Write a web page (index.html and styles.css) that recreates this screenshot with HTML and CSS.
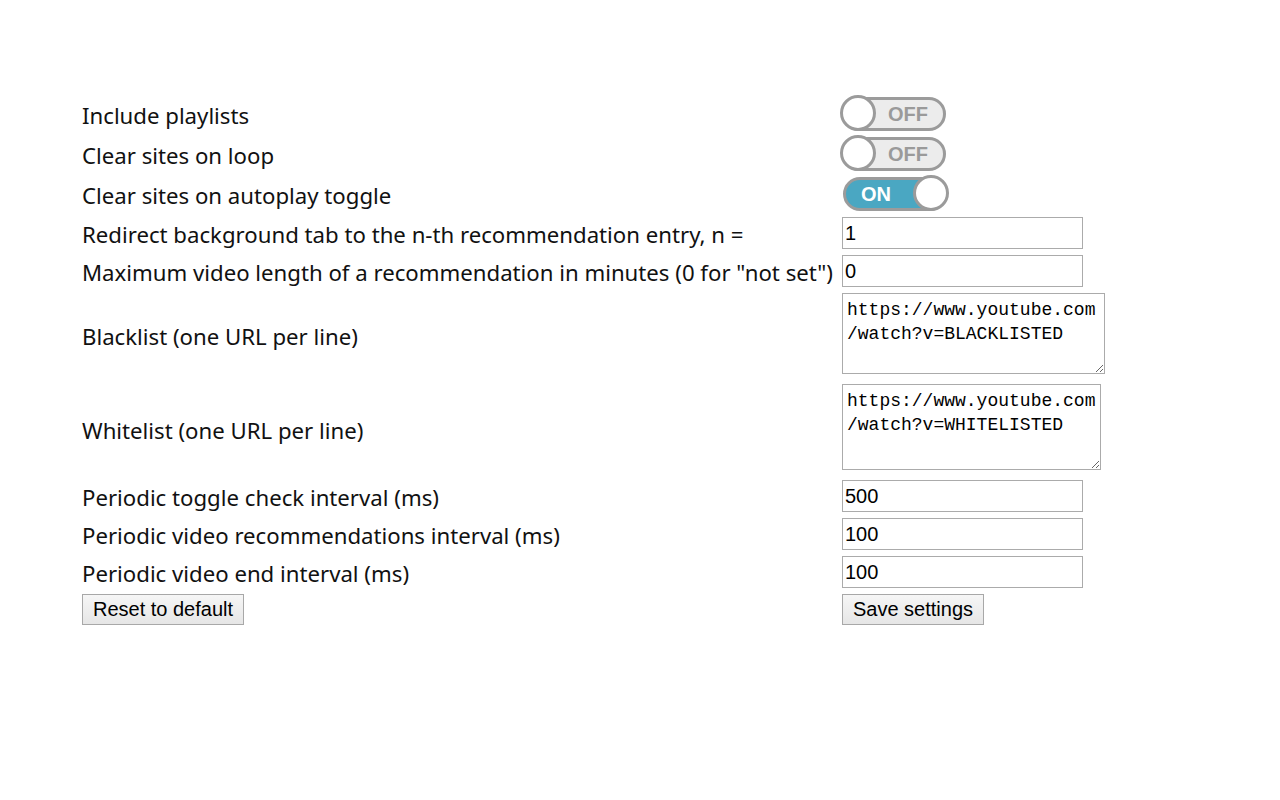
FILE: index.html
```html
<!DOCTYPE html>
<html>
<head>
<meta charset="utf-8">
<link rel="stylesheet" href="styles.css">
</head>
<body>
<div class="page">
  <div class="form">
    <div class="label">Include playlists</div>
    <div class="cell"><div class="toggle off"><span class="txt">OFF</span><span class="knob"></span></div></div>

    <div class="label">Clear sites on loop</div>
    <div class="cell"><div class="toggle off"><span class="txt">OFF</span><span class="knob"></span></div></div>

    <div class="label">Clear sites on autoplay toggle</div>
    <div class="cell"><div class="toggle on"><span class="txt">ON</span><span class="knob"></span></div></div>

    <div class="label">Redirect background tab to the n-th recommendation entry, n =</div>
    <div class="cell"><input class="field" type="text" value="1"></div>

    <div class="label">Maximum video length of a recommendation in minutes (0 for "not set")</div>
    <div class="cell"><input class="field" type="text" value="0"></div>

    <div class="label">Blacklist (one URL per line)</div>
    <div class="cell area-cell"><textarea class="area area-black">https://www.youtube.com/watch?v=BLACKLISTED</textarea></div>

    <div class="label">Whitelist (one URL per line)</div>
    <div class="cell area-cell"><textarea class="area area-white">https://www.youtube.com/watch?v=WHITELISTED</textarea></div>

    <div class="label">Periodic toggle check interval (ms)</div>
    <div class="cell"><input class="field" type="text" value="500"></div>

    <div class="label">Periodic video recommendations interval (ms)</div>
    <div class="cell"><input class="field" type="text" value="100"></div>

    <div class="label">Periodic video end interval (ms)</div>
    <div class="cell"><input class="field" type="text" value="100"></div>

    <div class="cell"><button class="btn btn-reset">Reset to default</button></div>
    <div class="cell"><button class="btn btn-save">Save settings</button></div>
  </div>
</div>
</body>
</html>
```

FILE: styles.css
```css
html, body {
  margin: 0;
  padding: 0;
  background: #ffffff;
}

.page {
  padding: 97px 0 0 82px;
  font-family: "Noto Sans", "Open Sans", sans-serif;
  color: #111;
}

.form {
  display: grid;
  grid-template-columns: 758px 300px;
  column-gap: 2px;
  row-gap: 6px;
}

.label {
  font-size: 22.2px;
  line-height: 28px;
  padding-top: 3px;
  align-self: center;
  white-space: nowrap;
}

.cell {
  display: flex;
  align-items: flex-start;
}

.area-cell {
  padding-bottom: 4px;
}

/* toggle switch */
.toggle {
  position: relative;
  width: 104px;
  height: 34px;
  box-sizing: border-box;
  border: 3px solid #9b9b9b;
  border-radius: 17px;
  font-family: "Liberation Sans", Arial, sans-serif;
  font-weight: bold;
  font-size: 20px;
  display: flex;
  align-items: center;
}

.toggle.off {
  background: #ececec;
  color: #9a9a9a;
  justify-content: flex-end;
  padding-right: 15px;
}

.toggle.on {
  background: #4aa7c2;
  color: #ffffff;
  justify-content: flex-start;
  padding-left: 15px;
  margin-left: 1px;
}

.knob {
  position: absolute;
  top: -5px;
  width: 36px;
  height: 36px;
  box-sizing: border-box;
  border: 3px solid #9b9b9b;
  border-radius: 50%;
  background: #ffffff;
}

.toggle.off .knob {
  left: -5px;
}

.toggle.on .knob {
  right: -5px;
}

/* text inputs */
.field {
  width: 241px;
  height: 32px;
  box-sizing: border-box;
  margin: 0;
  border: 1px solid #ababab;
  padding: 0 2px;
  font-family: "Liberation Sans", Arial, sans-serif;
  font-size: 20px;
  color: #000;
  background: #fff;
  outline: none;
}

.area {
  display: block;
  margin: 0;
  box-sizing: border-box;
  border: 1px solid #ababab;
  padding: 4px 3px 3px 4px;
  font-family: "Liberation Mono", "DejaVu Sans Mono", monospace;
  font-size: 18px;
  line-height: 24px;
  color: #000;
  resize: both;
  overflow: hidden;
  overflow-wrap: anywhere;
}

.area-black {
  width: 263px;
  height: 81px;
}

.area-white {
  width: 259px;
  height: 86px;
}

/* buttons */
.btn {
  margin: 0;
  height: 31px;
  box-sizing: border-box;
  border: 1px solid #a8a8a8;
  border-radius: 0;
  background: linear-gradient(#f6f6f6, #e6e6e6);
  font-family: "Liberation Sans", Arial, sans-serif;
  font-size: 20px;
  color: #000;
  padding: 0 6px;
}

.btn-reset {
  width: 162px;
}

.btn-save {
  width: 142px;
}
```
